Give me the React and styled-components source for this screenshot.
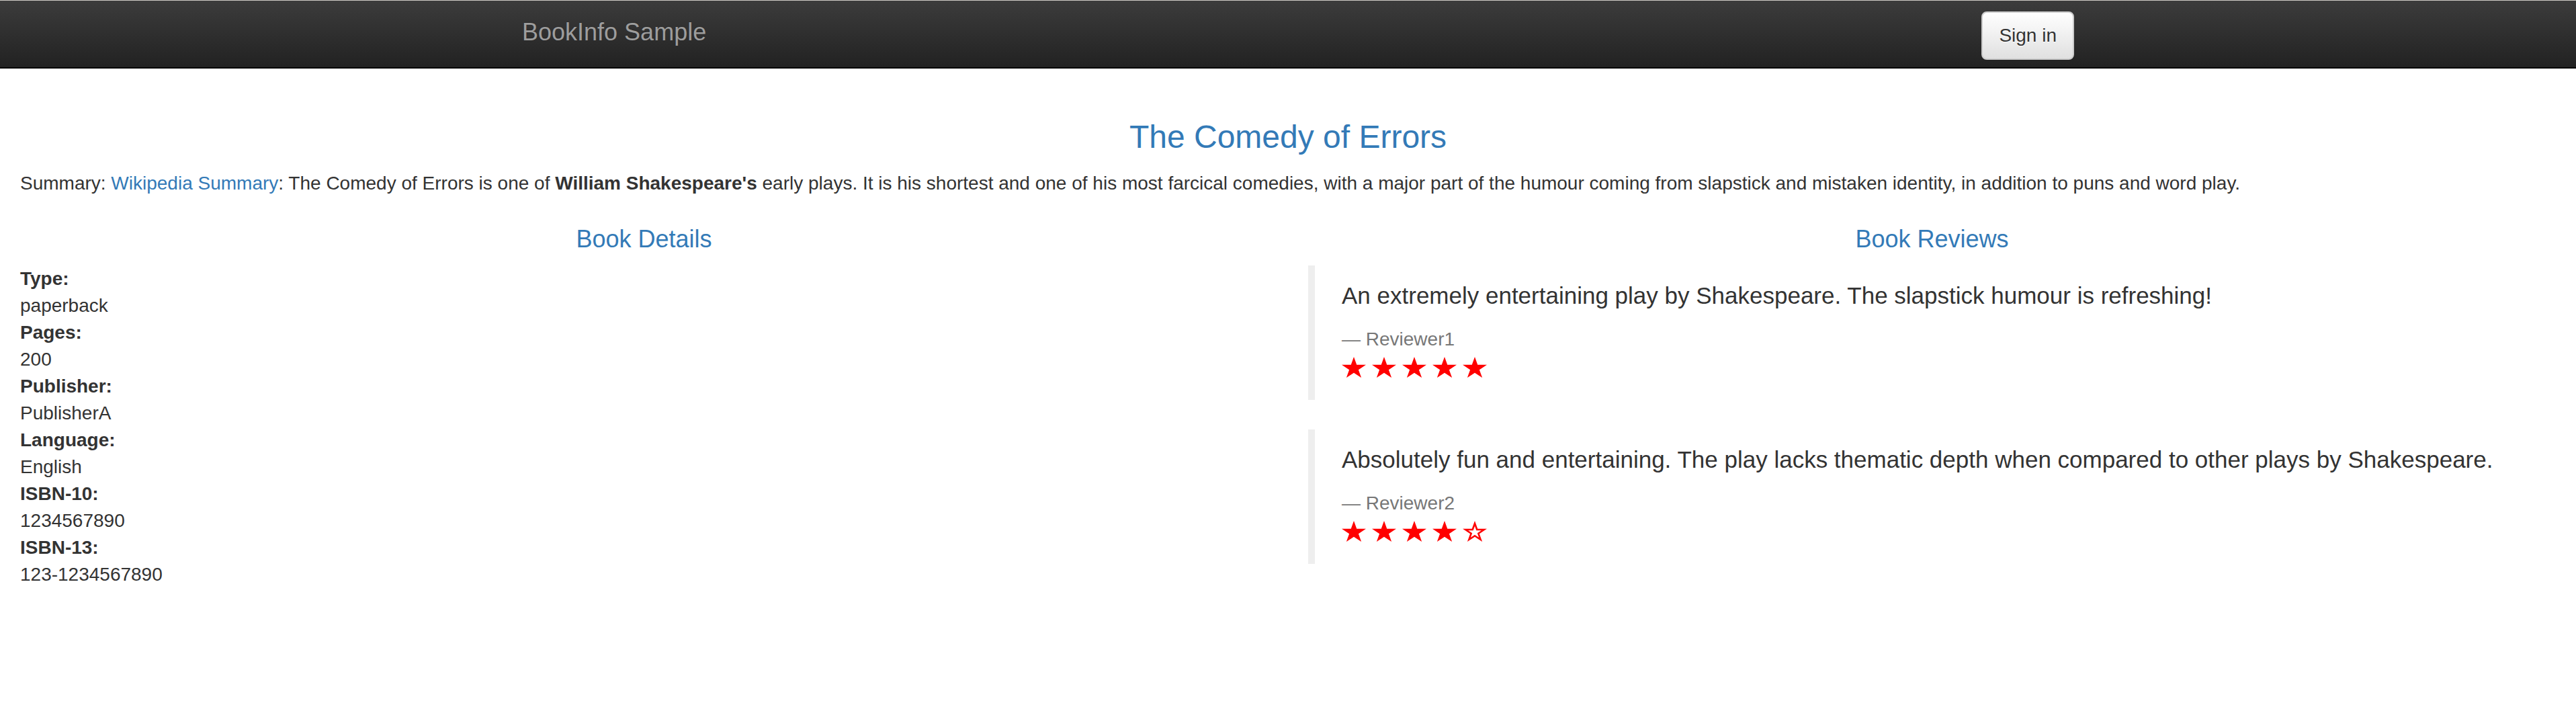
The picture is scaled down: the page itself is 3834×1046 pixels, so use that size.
import React from "react";
import styled, { createGlobalStyle } from "styled-components";

const GlobalStyle = createGlobalStyle`
  html, body { margin: 0; padding: 0; background: #fff; }
  body {
    font-family: "Liberation Sans", Helvetica, Arial, sans-serif;
    font-size: 28px;
    line-height: 1.42857;
    color: #333;
  }
  * { box-sizing: border-box; }
`;

const Navbar = styled.nav`
  height: 102px;
  background-image: linear-gradient(to bottom, #3c3c3c 0, #222 100%);
  border-bottom: 2px solid #080808;
  box-shadow: inset 0 1px 0 #cfcbc6;
`;

const NavContainer = styled.div`
  width: 2340px;
  margin: 0 auto;
  padding: 0 30px;
  display: flex;
  justify-content: space-between;
  align-items: flex-start;
`;

const Brand = styled.a`
  display: block;
  height: 100px;
  margin-left: -30px;
  padding: 28px 30px 32px;
  font-size: 36px;
  line-height: 40px;
  color: #9d9d9d;
  text-decoration: none;
  text-shadow: 0 -1px 0 rgba(0, 0, 0, 0.25);
`;

const SignIn = styled.button`
  margin-top: 17px;
  margin-right: -30px;
  padding: 14px 24px;
  font-family: inherit;
  font-size: 28px;
  line-height: 40px;
  color: #333;
  background-image: linear-gradient(to bottom, #fff 0, #e0e0e0 100%);
  border: 2px solid #ccc;
  border-radius: 8px;
  text-shadow: 0 1px 0 #fff;
  box-shadow: inset 0 1px 0 rgba(255, 255, 255, 0.15), 0 1px 1px rgba(0, 0, 0, 0.075);
  cursor: pointer;
`;

const Main = styled.main`
  padding: 76px 30px 0;
`;

const Title = styled.h3`
  margin: 0 0 22px;
  font-size: 48px;
  line-height: 52.8px;
  font-weight: 500;
  text-align: center;
  color: #337ab7;
`;

const Summary = styled.p`
  margin: 0 0 23px;
`;

const Link = styled.a`
  color: #337ab7;
  text-decoration: none;
`;

const Columns = styled.div`
  display: grid;
  grid-template-columns: 1fr 1fr;
  column-gap: 60px;
`;

const SectionTitle = styled.h4`
  margin: 20px 0;
  font-size: 36px;
  line-height: 39.6px;
  font-weight: 500;
  text-align: center;
  color: #337ab7;
`;

const DetailList = styled.dl`
  margin: 0 0 40px;
`;

const Term = styled.dt`
  font-weight: bold;
  line-height: 40px;
`;

const Value = styled.dd`
  margin: 0;
  line-height: 40px;
`;

const Review = styled.blockquote`
  margin: 0 0 44px;
  padding: 20px 40px;
  border-left: 10px solid #eee;
  font-size: 35px;
  line-height: 50px;
`;

const ReviewText = styled.p`
  margin: 0 0 20px;
`;

const Reviewer = styled.small`
  display: block;
  font-size: 28px;
  line-height: 40px;
  color: #777;
  &::before {
    content: "\\2014 \\00A0";
  }
`;

const Stars = styled.div`
  display: flex;
  align-items: flex-start;
  gap: 9px;
  height: 50px;
  padding-top: 6px;
`;

const STAR =
  "50,0 61.23,34.55 97.55,34.55 68.17,55.9 79.39,90.45 50,69.1 20.61,90.45 31.83,55.9 2.45,34.55 38.77,34.55";

const Star = ({ empty }) => (
  <svg
    width="36"
    height="31"
    viewBox="2.45 0 95.1 90.45"
    preserveAspectRatio="none"
    aria-hidden="true"
  >
    <polygon points={STAR} fill="#ff0000" />
    {empty && (
      <polygon
        points={STAR}
        fill="#fff"
        transform="translate(50 50) scale(0.55) translate(-50 -50)"
      />
    )}
  </svg>
);

const details = [
  ["Type:", "paperback"],
  ["Pages:", "200"],
  ["Publisher:", "PublisherA"],
  ["Language:", "English"],
  ["ISBN-10:", "1234567890"],
  ["ISBN-13:", "123-1234567890"],
];

const reviews = [
  {
    text: "An extremely entertaining play by Shakespeare. The slapstick humour is refreshing!",
    reviewer: "Reviewer1",
    rating: 5,
  },
  {
    text: "Absolutely fun and entertaining. The play lacks thematic depth when compared to other plays by Shakespeare.",
    reviewer: "Reviewer2",
    rating: 4,
  },
];

export default function App() {
  return (
    <>
      <GlobalStyle />
      <Navbar>
        <NavContainer>
          <Brand href="#">BookInfo Sample</Brand>
          <SignIn type="button">Sign in</SignIn>
        </NavContainer>
      </Navbar>
      <Main>
        <Title>The Comedy of Errors</Title>
        <Summary>
          Summary: <Link href="#">Wikipedia Summary</Link>: The Comedy of Errors is one of{" "}
          <b>William Shakespeare's</b> early plays. It is his shortest and one of his most
          farcical comedies, with a major part of the humour coming from slapstick and mistaken
          identity, in addition to puns and word play.
        </Summary>
        <Columns>
          <section>
            <SectionTitle>Book Details</SectionTitle>
            <DetailList>
              {details.map(([k, v]) => (
                <React.Fragment key={k}>
                  <Term>{k}</Term>
                  <Value>{v}</Value>
                </React.Fragment>
              ))}
            </DetailList>
          </section>
          <section>
            <SectionTitle>Book Reviews</SectionTitle>
            {reviews.map((r) => (
              <Review key={r.reviewer}>
                <ReviewText>{r.text}</ReviewText>
                <Reviewer>{r.reviewer}</Reviewer>
                <Stars>
                  {[0, 1, 2, 3, 4].map((i) => (
                    <Star key={i} empty={i >= r.rating} />
                  ))}
                </Stars>
              </Review>
            ))}
          </section>
        </Columns>
      </Main>
    </>
  );
}
